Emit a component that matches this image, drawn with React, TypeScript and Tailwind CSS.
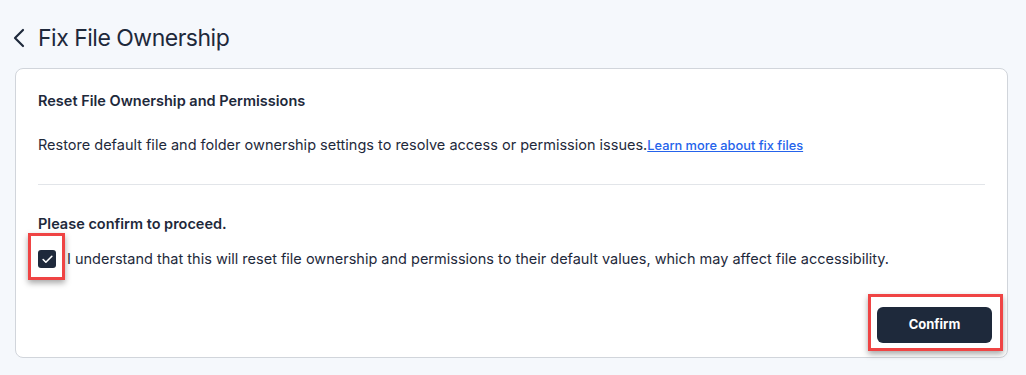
import React, { useState } from "react";
import { ChevronLeft, Check } from "lucide-react";

const font = { fontFamily: "Inter, 'Noto Sans', sans-serif" };

export default function App() {
  const [agreed, setAgreed] = useState(true);

  return (
    <div className="min-h-screen bg-[#f5f8fc] px-[15px] pt-[22px] text-[#1e293b]" style={font}>
      <div className="flex h-[32px] items-center gap-[3px]">
        <ChevronLeft className="h-[32px] w-[32px] -ml-[12px] text-[#1e293b]" strokeWidth={1.6} />
        <h1 className="text-[23px] font-normal tracking-[-0.5px] text-[#1e293b]">Fix File Ownership</h1>
      </div>

      <div className="mt-[14px] w-[993px] rounded-lg border border-[#d1d5db] bg-white px-[22px] pt-[22px] pb-[14px]">
        <h2 className="text-[14.5px] leading-[20px] font-semibold text-[#1e293b]">
          Reset File Ownership and Permissions
        </h2>
        <p className="mt-[24px] text-[14.5px] leading-[20px] text-[#1e293b]">
          Restore default file and folder ownership settings to resolve access or permission issues.
          <a href="#" className="text-[12.8px] font-medium text-[#2563eb] underline">
            Learn more about fix files
          </a>
        </p>

        <div className="mt-[28px] h-px bg-[#e2e5e9]" />

        <p className="mt-[29px] text-[14.5px] leading-[20px] font-semibold text-[#1e293b]">
          Please confirm to proceed.
        </p>

        <label className="mt-[15px] flex items-center gap-[11px] cursor-pointer">
          <span className="relative">
            <button
              type="button"
              onClick={() => setAgreed(!agreed)}
              className={`flex h-[18px] w-[18px] items-center justify-center rounded-[3px] ${
                agreed ? "bg-[#1e293b]" : "border border-gray-400 bg-white"
              }`}
            >
              {agreed && <Check className="h-[13px] w-[13px] text-white" strokeWidth={3} />}
            </button>
            <span className="pointer-events-none absolute -left-[10px] -top-[17px] h-[47px] w-[37px] border-[3px] border-[#ef4444] shadow-[0_3px_6px_rgba(0,0,0,0.35)]" />
          </span>
          <span className="text-[14.5px] leading-[20px] text-[#1e293b]">
            I understand that this will reset file ownership and permissions to their default values, which may
            affect file accessibility.
          </span>
        </label>

        <div className="mt-[38px] flex justify-end -mr-[7px]">
          <span className="relative">
            <button
              type="button"
              className="h-[36px] w-[115px] rounded-md bg-[#1e293b] text-[13px] font-bold text-white"
            >
              Confirm
            </button>
            <span className="pointer-events-none absolute -left-[9px] -top-[13px] h-[57px] w-[135px] border-[3px] border-[#ef4444] shadow-[0_3px_6px_rgba(0,0,0,0.35)]" />
          </span>
        </div>
      </div>
    </div>
  );
}
